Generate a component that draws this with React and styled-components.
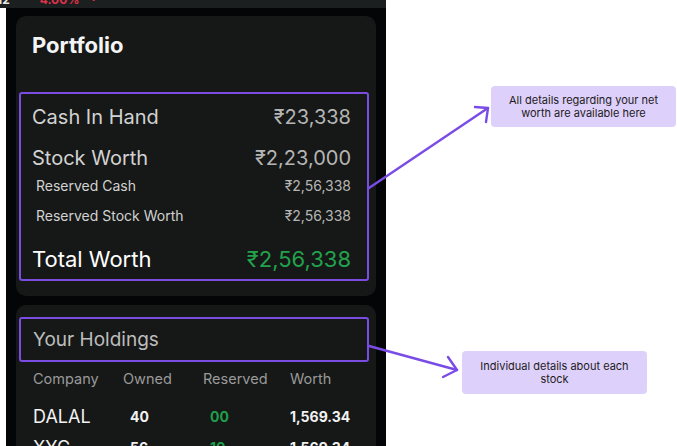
import React from "react";
import styled, {createGlobalStyle} from "styled-components";

const GlobalStyle = createGlobalStyle`
  html, body {
    margin: 0;
    padding: 0;
    background: #ffffff;
    font-family: Inter, "Noto Sans", sans-serif;
  }
`;

const Page = styled.div`
  position: relative;
  width: 677px;
  height: 446px;
  overflow: hidden;
  background: #ffffff;
`;

const Phone = styled.div`
  display: flex;
  flex-direction: column;
  width: 386px;
  height: 100%;
`;

const StatusBar = styled.div`
  flex-shrink: 0;
  display: flex;
  align-items: flex-end;
  height: 8px;
  background: #1b1f1f;
  overflow: hidden;
  font-size: 12px;
  line-height: 12px;
`;

const StatusText = styled.span`
  margin-left: ${p => p.left}px;
  margin-bottom: 2px;
  color: ${p => p.color};
  font-weight: 700;
  white-space: nowrap;
`;

const Screen = styled.div`
  flex: 1;
  min-height: 0;
  overflow: hidden;
  display: flex;
  flex-direction: column;
  gap: 9px;
  margin-left: 6px;
  padding: 8px 10px 0;
  background: #040506;
`;

const Card = styled.div`
  flex-shrink: 0;
  display: flex;
  flex-direction: column;
  background: #161817;
  border-radius: 10px;
  padding: ${p => p.pad};
`;

const Title = styled.h1`
  margin: 0 0 34px 13px;
  font-size: 22px;
  line-height: 25px;
  font-weight: 700;
  color: #f4f4f4;
`;

const Outline = styled.div`
  display: flex;
  flex-direction: column;
  margin-right: 7px;
  border: 2px solid #7b4ce2;
  border-radius: 3px;
  padding: ${p => p.pad};
`;

const WorthRow = styled.div`
  display: flex;
  justify-content: space-between;
  align-items: baseline;
  margin-top: ${p => p.gap}px;
  padding-left: ${p => (p.small ? 4 : 0)}px;
  font-size: ${p => p.size}px;
  line-height: ${p => p.lh}px;
  color: ${p => p.color || "#d2d2d2"};
`;

const Value = styled.span`
  color: ${p => p.color || "#b5b5b5"};
`;

const HoldingsTitle = styled.div`
  font-size: 19px;
  line-height: 24px;
  color: #bdbdbd;
`;

const Table = styled.div`
  display: grid;
  grid-template-columns: 90px 80px 87px 1fr;
  margin-left: 14px;
`;

const HeadCell = styled.div`
  margin-top: 7px;
  font-size: 14.5px;
  line-height: 20px;
  color: #9a9a9a;
`;

const Cell = styled.div`
  display: flex;
  align-items: flex-end;
  height: ${p => p.h}px;
  padding-left: ${p => p.indent || 0}px;
  font-size: ${p => (p.name ? 18 : 14)}px;
  font-weight: ${p => (p.name ? 400 : 700)};
  line-height: 22px;
  color: ${p => (p.green ? "#1f9e4a" : "#f2f2f2")};
`;

const Note = styled.div`
  position: absolute;
  left: ${p => p.x}px;
  top: ${p => p.y}px;
  width: ${p => p.w}px;
  height: ${p => p.h}px;
  display: flex;
  align-items: center;
  justify-content: center;
  box-sizing: border-box;
  padding: 0 14px;
  background: #ddd0fb;
  border-radius: 4px;
  font-size: 11px;
  line-height: 13px;
  text-align: center;
  color: #1e1b22;
`;

const Arrows = styled.svg`
  position: absolute;
  left: 0;
  top: 0;
  pointer-events: none;
`;

const worth = [
    {label: "Cash In Hand", value: "₹23,338", size: 20, lh: 24, gap: 0},
    {label: "Stock Worth", value: "₹2,23,000", size: 20, lh: 24, gap: 17},
    {label: "Reserved Cash", value: "₹2,56,338", size: 14, lh: 18, gap: 7, small: true},
    {label: "Reserved Stock Worth", value: "₹2,56,338", size: 14, lh: 18, gap: 12, small: true},
];

const holdings = [
    {name: "DALAL", owned: 40, reserved: "00", worth: "1,569.34"},
    {name: "XYC", owned: 56, reserved: "10", worth: "1,569.34"},
];

const App = () => {
    return (
        <Page>
            <GlobalStyle/>
            <Phone>
                <StatusBar>
                    <StatusText left={-3} color="#e8e8e8">12</StatusText>
                    <StatusText left={30} color="#e0314a">4.00%</StatusText>
                    <StatusText left={12} color="#e0314a">·</StatusText>
                    <StatusText left={80} color="#6a6f70">'</StatusText>
                    <StatusText left={160} color="#6a6f70">'</StatusText>
                </StatusBar>
                <Screen>
                    <Card pad="17px 0 15px 3px">
                        <Title>Portfolio</Title>
                        <Outline pad="11px 16px 7px 11px">
                            {worth.map((row, i) => (
                                <WorthRow key={i} size={row.size} lh={row.lh} gap={row.gap} small={row.small}>
                                    <span>{row.label}</span>
                                    <Value>{row.value}</Value>
                                </WorthRow>
                            ))}
                            <WorthRow size={22} lh={26} gap={21} color="#ffffff">
                                <span>Total Worth</span>
                                <Value color="#22a24c">₹2,56,338</Value>
                            </WorthRow>
                        </Outline>
                    </Card>
                    <Card pad="12px 0 20px 3px">
                        <Outline pad="9px 16px 8px 12px">
                            <HoldingsTitle>Your Holdings</HoldingsTitle>
                        </Outline>
                        <Table>
                            <HeadCell>Company</HeadCell>
                            <HeadCell>Owned</HeadCell>
                            <HeadCell>Reserved</HeadCell>
                            <HeadCell>Worth</HeadCell>
                            {holdings.map((h, i) => (
                                <React.Fragment key={i}>
                                    <Cell name h={i === 0 ? 39 : 31}>{h.name}</Cell>
                                    <Cell indent={7} h={i === 0 ? 39 : 31}>{h.owned}</Cell>
                                    <Cell indent={7} green h={i === 0 ? 39 : 31}>{h.reserved}</Cell>
                                    <Cell h={i === 0 ? 39 : 31}>{h.worth}</Cell>
                                </React.Fragment>
                            ))}
                        </Table>
                    </Card>
                </Screen>
            </Phone>

            <Note x={491} y={86} w={185} h={41}>
                All details regarding your net worth are available here
            </Note>
            <Note x={462} y={351} w={185} h={43}>
                Individual details about each stock
            </Note>

            <Arrows width="677" height="446" viewBox="0 0 677 446">
                <g fill="none" stroke="#7a4ce6" strokeWidth="2.4" strokeLinecap="round" strokeLinejoin="round">
                    <path d="M369 188 L488 108"/>
                    <path d="M475 107 L488 108 L486 122"/>
                    <path d="M369 346 L457 370"/>
                    <path d="M448 357 L457 370 L443 377"/>
                </g>
            </Arrows>
        </Page>
    );
};

export default App;
